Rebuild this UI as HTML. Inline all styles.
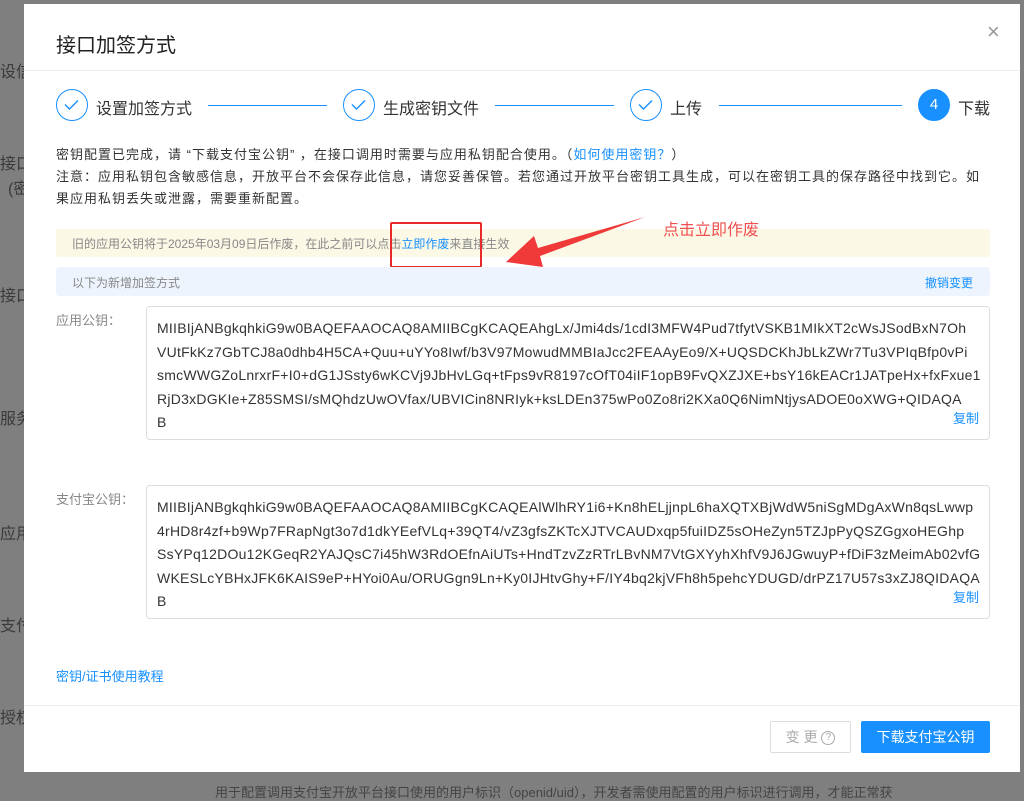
<!DOCTYPE html>
<html><head><meta charset="utf-8"><style>
*{margin:0;padding:0;box-sizing:border-box}
body{width:1024px;height:797px;background:#7f7f7f;position:relative;overflow:hidden;font-family:"Liberation Sans","Noto Sans CJK SC",sans-serif;color:#333}
.a{position:absolute;white-space:nowrap}
.bg{color:#3a3a3a;font-size:16px}
.m{position:absolute;left:24px;top:4px;width:996px;height:768px;background:#fff}
.c{position:absolute;width:32px;height:32px;border:1.5px solid #1890ff;border-radius:50%;top:89px}
.ln{position:absolute;top:105px;height:1px;background:#1890ff}
.st{position:absolute;top:95px;font-size:16px;color:#333}
.key{position:absolute;left:146px;width:844px;border:1px solid #ddd;border-radius:4px;padding:10px 10px 0 10px;font-size:14px;line-height:23.5px;color:#333;white-space:nowrap;letter-spacing:0.25px}
.lb{font-size:13px;color:#888}
.blue{color:#1890ff}
</style></head><body>
<div class="a bg" style="left:0;top:58px">设信</div>
<div class="a bg" style="left:0;top:150px">接口</div>
<div class="a bg" style="left:8px;top:175px">(密</div>
<div class="a bg" style="left:0;top:282px">接口</div>
<div class="a bg" style="left:0;top:405px">服务</div>
<div class="a bg" style="left:0;top:520px">应用</div>
<div class="a bg" style="left:0;top:612px">支付</div>
<div class="a bg" style="left:0;top:704px">授权</div>
<div class="a" style="left:215px;top:782px;font-size:13px;color:#444">用于配置调用支付宝开放平台接口使用的用户标识（openid/uid），开发者需使用配置的用户标识进行调用，才能正常获</div>
<div class="m">
<div class="a" style="left:32px;top:25px;font-size:20px;color:#222">接口加签方式</div>
<div class="a" style="left:963px;top:15px;font-size:22px;color:#999">×</div>
<div style="position:absolute;left:0;top:66px;width:996px;height:1px;background:#eee"></div>
</div>
<div class="c" style="left:56px"><svg width="29" height="29" style="position:absolute;left:0;top:0"><path d="M8 14.5l4.5 4.5 8.5-8.5" fill="none" stroke="#1890ff" stroke-width="1.4"/></svg></div>
<div class="st" style="left:96px">设置加签方式</div>
<div class="ln" style="left:208px;width:119px"></div>
<div class="c" style="left:343px"><svg width="29" height="29" style="position:absolute;left:0;top:0"><path d="M8 14.5l4.5 4.5 8.5-8.5" fill="none" stroke="#1890ff" stroke-width="1.4"/></svg></div>
<div class="st" style="left:383px">生成密钥文件</div>
<div class="ln" style="left:495px;width:119px"></div>
<div class="c" style="left:630px"><svg width="29" height="29" style="position:absolute;left:0;top:0"><path d="M8 14.5l4.5 4.5 8.5-8.5" fill="none" stroke="#1890ff" stroke-width="1.4"/></svg></div>
<div class="st" style="left:670px">上传</div>
<div class="ln" style="left:719px;width:183px"></div>
<div class="c" style="left:918px;background:#1890ff;color:#fff;font-size:15px;text-align:center;line-height:29px">4</div>
<div class="st" style="left:958px">下载</div>
<div class="a" style="left:56px;top:144px;font-size:13px;line-height:22px;color:#333;letter-spacing:1px">密钥配置已完成，请 “下载支付宝公钥” ，在接口调用时需要与应用私钥配合使用。（<span class="blue">如何使用密钥？</span>）<br>注意：应用私钥包含敏感信息，开放平台不会保存此信息，请您妥善保管。若您通过开放平台密钥工具生成，可以在密钥工具的保存路径中找到它。如<br>果应用私钥丢失或泄露，需要重新配置。</div>
<div style="position:absolute;left:56px;top:229px;width:934px;height:28px;background:#fbf8e6;border-radius:3px"></div>
<div class="a" style="left:72px;top:235px;font-size:12px;color:#888">旧的应用公钥将于2025年03月09日后作废，在此之前可以点击<span class="blue">立即作废</span>来直接生效</div>
<div style="position:absolute;left:390px;top:222px;width:92px;height:46px;border:2.5px solid #e82a2a;border-radius:2px"></div>
<svg style="position:absolute;left:500px;top:210px" width="160" height="70"><path d="M145 7 L38 38 L34 26 L6 52 L43 57 L40 46 Z" fill="#f03a3a"/></svg>
<div class="a" style="left:663px;top:216px;font-size:16px;color:#f05050">点击立即作废</div>
<div style="position:absolute;left:56px;top:267px;width:934px;height:29px;background:#edf4fd;border-radius:3px"></div>
<div class="a" style="left:72px;top:274px;font-size:12px;color:#888">以下为新增加签方式</div>
<div class="a blue" style="left:925px;top:274px;font-size:12px">撤销变更</div>
<div class="a lb" style="left:56px;top:310px">应用公钥：</div>
<div class="key" style="top:306px;height:134px">MIIBIjANBgkqhkiG9w0BAQEFAAOCAQ8AMIIBCgKCAQEAhgLx/Jmi4ds/1cdI3MFW4Pud7tfytVSKB1MIkXT2cWsJSodBxN7Oh<br>VUtFkKz7GbTCJ8a0dhb4H5CA+Quu+uYYo8Iwf/b3V97MowudMMBIaJcc2FEAAyEo9/X+UQSDCKhJbLkZWr7Tu3VPIqBfp0vPi<br>smcWWGZoLnrxrF+I0+dG1JSsty6wKCVj9JbHvLGq+tFps9vR8197cOfT04iIF1opB9FvQXZJXE+bsY16kEACr1JATpeHx+fxFxue1<br>RjD3xDGKIe+Z85SMSI/sMQhdzUwOVfax/UBVICin8NRIyk+ksLDEn375wPo0Zo8ri2KXa0Q6NimNtjysADOE0oXWG+QIDAQA<br>B<div class="blue" style="position:absolute;right:10px;top:100px;font-size:13px;letter-spacing:0">复制</div></div>
<div class="a lb" style="left:56px;top:489px">支付宝公钥：</div>
<div class="key" style="top:485px;height:134px">MIIBIjANBgkqhkiG9w0BAQEFAAOCAQ8AMIIBCgKCAQEAlWlhRY1i6+Kn8hELjjnpL6haXQTXBjWdW5niSgMDgAxWn8qsLwwp<br>4rHD8r4zf+b9Wp7FRapNgt3o7d1dkYEefVLq+39QT4/vZ3gfsZKTcXJTVCAUDxqp5fuiIDZ5sOHeZyn5TZJpPyQSZGgxoHEGhp<br>SsYPq12DOu12KGeqR2YAJQsC7i45hW3RdOEfnAiUTs+HndTzvZzRTrLBvNM7VtGXYyhXhfV9J6JGwuyP+fDiF3zMeimAb02vfG<br>WKESLcYBHxJFK6KAIS9eP+HYoi0Au/ORUGgn9Ln+Ky0IJHtvGhy+F/IY4bq2kjVFh8h5pehcYDUGD/drPZ17U57s3xZJ8QIDAQA<br>B<div class="blue" style="position:absolute;right:10px;top:100px;font-size:13px;letter-spacing:0">复制</div></div>
<div class="a blue" style="left:56px;top:666px;font-size:13px">密钥/证书使用教程</div>
<div style="position:absolute;left:24px;top:705px;width:996px;height:1px;background:#eee"></div>
<div style="position:absolute;left:770px;top:721px;width:81px;height:32px;border:1px solid #ddd;border-radius:2px;color:#aaa;font-size:14px;text-align:center;line-height:30px">变 更 <span style="display:inline-block;width:14px;height:14px;border:1px solid #aaa;border-radius:50%;font-size:10px;line-height:12px;vertical-align:middle">?</span></div>
<div style="position:absolute;left:861px;top:721px;width:129px;height:32px;background:#1890ff;border-radius:2px;color:#fff;font-size:14px;text-align:center;line-height:32px">下载支付宝公钥</div>
</body></html>
